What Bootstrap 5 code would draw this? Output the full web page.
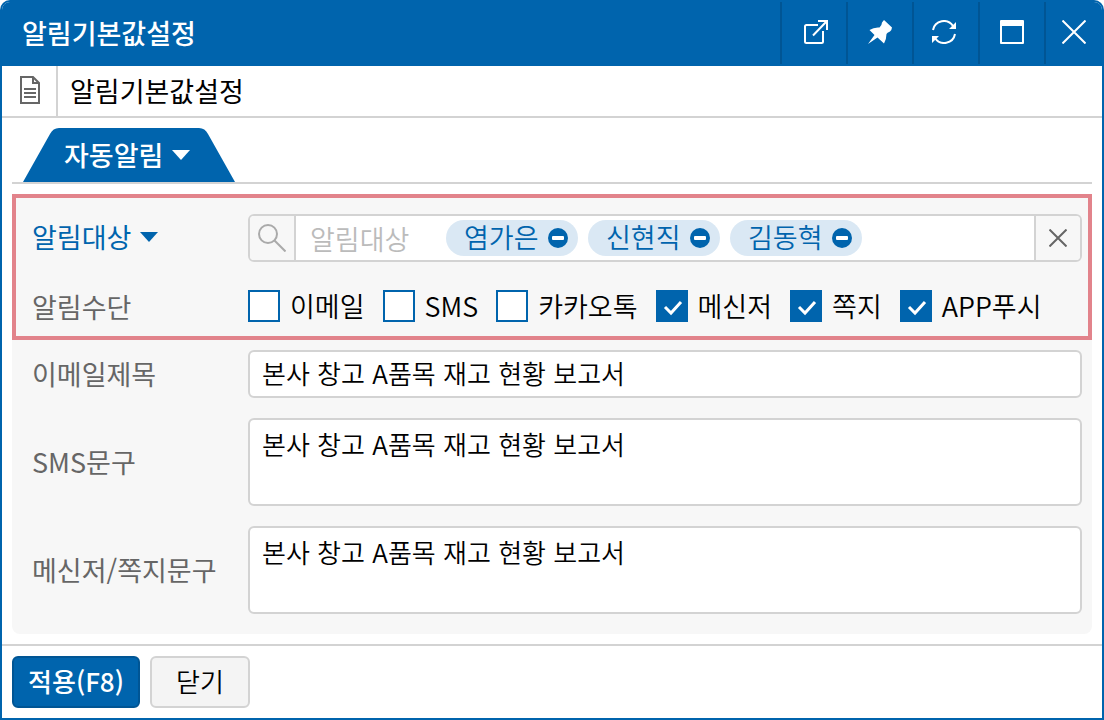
<!DOCTYPE html>
<html lang="ko">
<head>
<meta charset="utf-8">
<meta name="viewport" content="width=device-width, initial-scale=1">
<title>알림기본값설정</title>
<link rel="stylesheet" href="https://cdn.jsdelivr.net/npm/bootstrap@5.3.0/dist/css/bootstrap.min.css">
<style>
  :root { --brand: #0064ad; --brand-dark: #005594; --line: #d3d3d3; --panel: #f7f7f7; }
  body { font-family: "Noto Sans CJK KR", sans-serif; font-size: 27px; line-height: 40px; color: #000; background: #fff; }
  .window { border: 2px solid var(--brand); border-radius: 10px 10px 0 0; background: #fff; overflow: hidden; }
  .titlebar { background: var(--brand); color: #fff; height: 64px; padding-bottom: 2px; }
  .titlebar h1 { font-size: 27px; line-height: 40px; font-weight: 500; padding-left: 20px; }
  .tool { width: 66px; padding: 0 0 2px; color: #fff; background: none; border: 0; border-left: 2px solid var(--brand-dark); }
  .tool-last { width: 58px; }
  .subbar { border-bottom: 2px solid var(--line); height: 52px; }
  .subbar h2 { font-size: 27px; line-height: 40px; font-weight: 400; padding-left: 12px; }
  .doc { width: 56px; border-right: 2px solid var(--line); padding: 0 0 2px 2px; }
  .content { padding: 10px; }
  .tabs { border-bottom: 2px solid var(--line); padding-left: 11px; }
  .tab { position: relative; width: 212px; height: 54px; padding: 0 0 0 41px; border: 0; background: none; color: #fff; font-weight: 500; text-align: left; }
  .tab .shape { position: absolute; inset: 0; }
  .tab .face { position: relative; gap: 9px; }
  .panel { background: var(--panel); border-radius: 8px; margin-top: 10px; padding-bottom: 20px; }
  .marked { border: 4px solid #e2838b; padding: 16px 6px 14px 16px; row-gap: 28px; }
  .plain { padding: 10px 10px 0 20px; row-gap: 20px; }
  .fl { width: 216px; color: #666; font-weight: 400; }
  .fl-link { color: var(--brand); padding: 0 0 2px; border: 0; background: none; gap: 9px; text-align: left; }
  .picker { height: 48px; border: 2px solid var(--line); border-radius: 6px; background: #fff; overflow: hidden; }
  .cap { width: 46px; padding: 0; border: 0; background: var(--panel); }
  .cap-l { border-right: 2px solid var(--line); }
  .cap-r { border-left: 2px solid var(--line); }
  .find { width: 150px; border: 0; padding: 0 0 0 14px; font-weight: 350; height: 44px; background: none; outline: 0; }
  .find::placeholder { color: #bbb; opacity: 1; }
  .chips { gap: 10px; }
  .chip { height: 36px; min-width: 132px; line-height: 34px; border-radius: 18px; background: #dae8f4; color: var(--brand); padding: 0 10px 0 18px; font-weight: 350; }
  .chip-text { padding-bottom: 2px; }
  .chip button { padding: 0; border: 0; background: none; }
  .checks { gap: 18px; height: 32px; }
  .checks label { gap: 10px; font-weight: 350; }
  .checks .form-check-input { width: 32px; height: 32px; margin: 0; border: 2px solid var(--brand); border-radius: 0; background-color: #fff; }
  .checks .form-check-input:checked { background-color: var(--brand); background-size: 32px 32px; background-position: center;
    background-image: url("data:image/svg+xml,%3csvg xmlns='http://www.w3.org/2000/svg' viewBox='0 0 32 32'%3e%3cpath fill='none' stroke='%23fff' stroke-width='3' d='M9 17l6 6L25 12'/%3e%3c/svg%3e"); }
  .box { font-size: 26px; line-height: 40px; font-weight: 350; color: #000; border: 2px solid var(--line); border-radius: 6px; padding: 0 12px 4px; height: 48px; }
  .box:focus { color: #000; }
  textarea.box { height: 88px; padding-top: 4px; resize: none; }
  .foot { border-top: 2px solid var(--line); padding: 10px; gap: 10px; }
  .foot .btn { height: 52px; font-size: 26px; line-height: 40px; padding: 0 0 2px; border-width: 2px; border-radius: 6px; }
  .btn-apply, .btn-apply:hover { width: 128px; background: var(--brand); border-color: var(--brand-dark); color: #fff; font-weight: 500; }
  .btn-shut, .btn-shut:hover { width: 100px; background: #f4f4f4; border-color: var(--line); color: #000; font-weight: 350; }
  svg { display: block; flex: none; }
</style>
</head>
<body>
<main class="window min-vh-100 d-flex flex-column">
  <header class="titlebar d-flex">
    <h1 class="mb-0 me-auto align-self-center">알림기본값설정</h1>
    <button class="tool d-flex align-items-center justify-content-center" type="button" aria-label="새 창">
      <svg width="28" height="24" viewBox="-4 0 28 24" fill="none" stroke="#fff" stroke-width="2"><path d="M14 5H2.500Q1 5 1 6.500V21.500Q1 23 2.500 23H17.500Q19 23 19 21.500V11M9 15.500L22 2M14 1H23V10"/></svg>
    </button>
    <button class="tool d-flex align-items-center justify-content-center" type="button" aria-label="고정">
      <svg width="24" height="24" viewBox="0 0 24 24" fill="#fff"><path d="M16 0L24 7.500Q23.500 11 22 11.500Q19 12.500 18.500 14Q18.500 19 16 23.500L9.500 17.500L0 24L6.500 15L1.500 10Q6 7 11.500 7.500Q14 5 14 2.500Z"/></svg>
    </button>
    <button class="tool d-flex align-items-center justify-content-center" type="button" aria-label="새로고침">
      <svg width="28" height="24" viewBox="0 0 28 24"><path d="M1 10A11 11 0 0 1 21 6M23 14A11 11 0 0 1 3 18" fill="none" stroke="#fff" stroke-width="2"/><path d="M24 2V9H17ZM0 23V16H7Z" fill="#fff"/></svg>
    </button>
    <button class="tool d-flex align-items-center justify-content-center" type="button" aria-label="최대화">
      <svg width="24" height="24" viewBox="0 0 24 24"><path fill="#fff" fill-rule="evenodd" d="M1 0H23Q24 0 24 1V23Q24 24 23 24H1Q0 24 0 23V1Q0 0 1 0ZM2 6V22H22V6Z"/></svg>
    </button>
    <button class="tool tool-last d-flex align-items-center justify-content-center" type="button" aria-label="창 닫기">
      <svg width="24" height="24" viewBox="0 0 24 24" stroke="#fff" stroke-width="2"><path d="M0.500 0.500L23.500 23.500M23.500 0.500L0.500 23.500"/></svg>
    </button>
  </header>

  <div class="subbar d-flex align-items-stretch">
    <div class="doc d-flex align-items-center justify-content-center">
      <svg width="20" height="28" viewBox="0 0 20 28" fill="none" stroke="#666" stroke-width="2"><path d="M1 1H13L19 7V27H1ZM13 1V7H19M4 13H16M4 17H16M4 21H16"/></svg>
    </div>
    <h2 class="mb-0 align-self-center">알림기본값설정</h2>
  </div>

  <form class="flex-grow-1 d-flex flex-column">
    <div class="content flex-grow-1">
      <div class="tabs">
        <button class="tab d-block" type="button">
          <svg class="shape" width="212" height="54" viewBox="0 0 212 54"><path fill="#0064ad" d="M0 54L27 6Q30 0 36 0H176Q182 0 185 6L212 54Z"/></svg>
          <span class="face d-flex align-items-center">자동알림<svg width="18" height="10" viewBox="0 0 18 10"><path fill="#fff" d="M0 0H18L9 10Z"/></svg></span>
        </button>
      </div>

      <div class="panel">
        <div class="marked d-flex flex-column">
          <div class="d-flex align-items-center">
            <button class="fl fl-link d-flex align-items-center flex-shrink-0" type="button">알림대상<svg width="18" height="10" viewBox="0 0 18 10"><path fill="#0064ad" d="M0 0H18L9 10Z"/></svg></button>
            <div class="picker d-flex flex-grow-1">
              <button class="cap cap-l d-flex align-items-center justify-content-center" type="button" aria-label="검색">
                <svg width="28" height="28" viewBox="0 0 28 28" fill="none" stroke="#aaa" stroke-width="2"><circle cx="10" cy="10" r="9"/><path d="M16.500 16.500L27.500 27.500"/></svg>
              </button>
              <input class="find" type="text" placeholder="알림대상" aria-label="알림대상">
              <div class="chips d-flex align-items-center me-auto">
                <span class="chip d-flex align-items-center justify-content-between"><span class="chip-text">염가은</span><button type="button" aria-label="염가은 제거"><svg width="20" height="20" viewBox="0 0 20 20"><circle cx="10" cy="10" r="10" fill="#0064ad"/><rect x="4" y="8" width="12" height="4" rx="1" fill="#fff"/></svg></button></span>
                <span class="chip d-flex align-items-center justify-content-between"><span class="chip-text">신현직</span><button type="button" aria-label="신현직 제거"><svg width="20" height="20" viewBox="0 0 20 20"><circle cx="10" cy="10" r="10" fill="#0064ad"/><rect x="4" y="8" width="12" height="4" rx="1" fill="#fff"/></svg></button></span>
                <span class="chip d-flex align-items-center justify-content-between"><span class="chip-text">김동혁</span><button type="button" aria-label="김동혁 제거"><svg width="20" height="20" viewBox="0 0 20 20"><circle cx="10" cy="10" r="10" fill="#0064ad"/><rect x="4" y="8" width="12" height="4" rx="1" fill="#fff"/></svg></button></span>
              </div>
              <button class="cap cap-r d-flex align-items-center justify-content-center" type="button" aria-label="지우기">
                <svg width="18" height="18" viewBox="0 0 18 18" stroke="#666" stroke-width="2"><path d="M0.500 0.500L17.500 17.500M17.500 0.500L0.500 17.500"/></svg>
              </button>
            </div>
          </div>
          <div class="d-flex align-items-center" role="group" aria-labelledby="means">
            <span class="fl flex-shrink-0 lh-1" id="means">알림수단</span>
            <div class="checks d-flex align-items-center">
              <label class="d-flex align-items-center"><input class="form-check-input" type="checkbox">이메일</label>
              <label class="d-flex align-items-center"><input class="form-check-input" type="checkbox">SMS</label>
              <label class="d-flex align-items-center"><input class="form-check-input" type="checkbox">카카오톡</label>
              <label class="d-flex align-items-center"><input class="form-check-input" type="checkbox" checked>메신저</label>
              <label class="d-flex align-items-center"><input class="form-check-input" type="checkbox" checked>쪽지</label>
              <label class="d-flex align-items-center"><input class="form-check-input" type="checkbox" checked>APP푸시</label>
            </div>
          </div>
        </div>

        <div class="plain d-flex flex-column">
          <div class="d-flex align-items-center">
            <label class="fl flex-shrink-0" for="mail">이메일제목</label>
            <input class="form-control box" id="mail" type="text" value="본사 창고 A품목 재고 현황 보고서">
          </div>
          <div class="d-flex align-items-center">
            <label class="fl flex-shrink-0" for="sms">SMS문구</label>
            <textarea class="form-control box" id="sms">본사 창고 A품목 재고 현황 보고서</textarea>
          </div>
          <div class="d-flex align-items-center">
            <label class="fl flex-shrink-0" for="memo">메신저/쪽지문구</label>
            <textarea class="form-control box" id="memo">본사 창고 A품목 재고 현황 보고서</textarea>
          </div>
        </div>
      </div>
    </div>

    <footer class="foot d-flex">
      <button class="btn btn-apply" type="button">적용(F8)</button>
      <button class="btn btn-shut" type="button">닫기</button>
    </footer>
  </form>
</main>
<script src="https://cdn.jsdelivr.net/npm/bootstrap@5.3.0/dist/js/bootstrap.bundle.min.js"></script>
</body>
</html>
